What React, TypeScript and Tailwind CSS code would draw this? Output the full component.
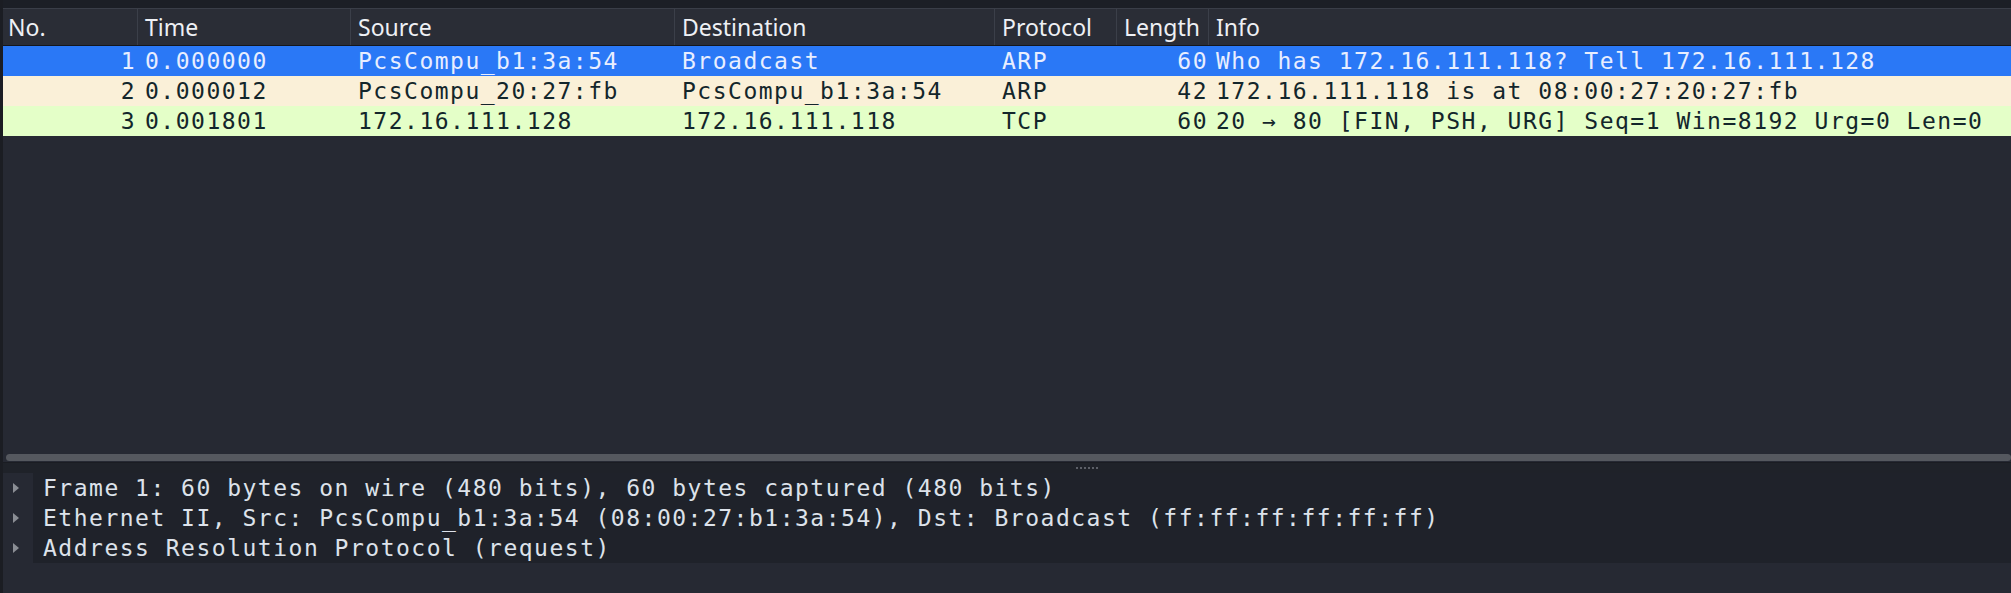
import React from 'react';

type Packet = {
  no: number;
  time: string;
  source: string;
  destination: string;
  protocol: string;
  length: number;
  info: string;
  tone: 'selected' | 'arp' | 'tcp';
};

const packets: Packet[] = [
  { no: 1, time: '0.000000', source: 'PcsCompu_b1:3a:54', destination: 'Broadcast', protocol: 'ARP', length: 60, info: 'Who has 172.16.111.118? Tell 172.16.111.128', tone: 'selected' },
  { no: 2, time: '0.000012', source: 'PcsCompu_20:27:fb', destination: 'PcsCompu_b1:3a:54', protocol: 'ARP', length: 42, info: '172.16.111.118 is at 08:00:27:20:27:fb', tone: 'arp' },
  { no: 3, time: '0.001801', source: '172.16.111.128', destination: '172.16.111.118', protocol: 'TCP', length: 60, info: '20 \u2192 80 [FIN, PSH, URG] Seq=1 Win=8192 Urg=0 Len=0', tone: 'tcp' },
];

const details = [
  'Frame 1: 60 bytes on wire (480 bits), 60 bytes captured (480 bits)',
  'Ethernet II, Src: PcsCompu_b1:3a:54 (08:00:27:b1:3a:54), Dst: Broadcast (ff:ff:ff:ff:ff:ff)',
  'Address Resolution Protocol (request)',
];

const toneClass = {
  selected: 'bg-[#2a78f6] text-[#e8eeff]',
  arp: 'bg-[#faf0d8] text-[#13262b]',
  tcp: 'bg-[#e4ffc8] text-[#13262b]',
};

const mono = "font-['DejaVu_Sans_Mono',monospace] text-[23px] tracking-[1.5px] whitespace-nowrap";

function HeaderCell({ label, w, first }: { label: string; w: string; first?: boolean }) {
  return (
    <div className={`${w} h-full flex items-center border-r border-[#3b3f49] ${first ? 'pl-[5px]' : 'pl-[7px]'}`}>
      {label}
    </div>
  );
}

export default function App() {
  return (
    <div className="w-[2011px] h-[593px] bg-[#262933] border-l-[3px] border-[#1b1d23] flex flex-col overflow-hidden">
      {/* top strip */}
      <div className="h-[8px] bg-[#1c1f26] shrink-0" />

      {/* column header */}
      <div className="h-[38px] shrink-0 flex bg-[#2a2d36] border-t border-[#3a3e48] border-b border-b-[#15171c] text-[#eef0f4] font-['Noto_Sans',sans-serif] text-[23px]">
        <HeaderCell label="No." w="w-[135px]" first />
        <HeaderCell label="Time" w="w-[213px]" />
        <HeaderCell label="Source" w="w-[324px]" />
        <HeaderCell label="Destination" w="w-[320px]" />
        <HeaderCell label="Protocol" w="w-[122px]" />
        <HeaderCell label="Length" w="w-[92px]" />
        <div className="flex-1 h-full flex items-center pl-[7px]">Info</div>
      </div>

      {/* packet list */}
      <div className="flex-1 flex flex-col">
        {packets.map((p) => (
          <div key={p.no} className={`h-[30px] flex items-center ${mono} ${toneClass[p.tone]}`}>
            <div className="w-[135px] text-right pr-[2px]">{p.no}</div>
            <div className="w-[213px] pl-[7px]">{p.time}</div>
            <div className="w-[324px] pl-[7px]">{p.source}</div>
            <div className="w-[320px] pl-[7px]">{p.destination}</div>
            <div className="w-[122px] pl-[7px]">{p.protocol}</div>
            <div className="w-[92px] text-right pr-[1px]">{p.length}</div>
            <div className="flex-1 pl-[7px]">{p.info}</div>
          </div>
        ))}
      </div>

      {/* horizontal scrollbar */}
      <div className="h-[10px] shrink-0 flex items-center pl-[3px]">
        <div className="h-[7px] flex-1 rounded-full bg-[#55585f]" />
      </div>

      {/* splitter */}
      <div className="h-[11px] shrink-0 bg-[#1f2229] border-t border-[#1a1c22] flex items-center justify-center">
        <div className="flex gap-[2px] ml-[160px]">
          {[0, 1, 2, 3, 4, 5].map((i) => (
            <div key={i} className="w-[2px] h-[2px] bg-[#5d6068]" />
          ))}
        </div>
      </div>

      {/* packet details */}
      <div className="h-[120px] shrink-0 flex flex-col">
        <div className="flex flex-col">
          {details.map((d) => (
            <div key={d} className="h-[30px] flex items-center">
              <div className="w-[30px] h-full flex items-center pl-[9px]">
                <svg width="8" height="12" viewBox="0 0 8 12">
                  <path d="M1 1 L7 6 L1 11 Z" fill="#8a8d94" />
                </svg>
              </div>
              <div className={`flex-1 h-full flex items-center pl-[10px] bg-[#1f222a] text-[#dde2ea] ${mono}`}>{d}</div>
            </div>
          ))}
        </div>
      </div>
    </div>
  );
}
